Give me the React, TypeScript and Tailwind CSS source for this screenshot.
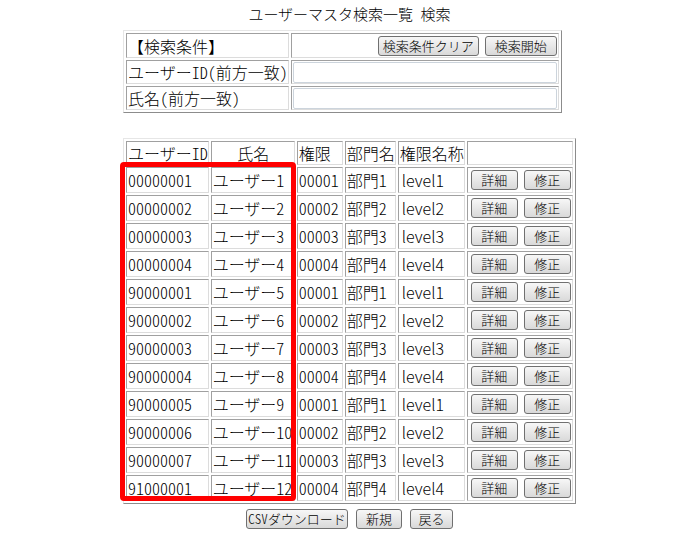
import React from 'react';

const users = [
  { id: '00000001', name: 'ユーザー1', role: '00001', dept: '部門1', level: 'level1' },
  { id: '00000002', name: 'ユーザー2', role: '00002', dept: '部門2', level: 'level2' },
  { id: '00000003', name: 'ユーザー3', role: '00003', dept: '部門3', level: 'level3' },
  { id: '00000004', name: 'ユーザー4', role: '00004', dept: '部門4', level: 'level4' },
  { id: '90000001', name: 'ユーザー5', role: '00001', dept: '部門1', level: 'level1' },
  { id: '90000002', name: 'ユーザー6', role: '00002', dept: '部門2', level: 'level2' },
  { id: '90000003', name: 'ユーザー7', role: '00003', dept: '部門3', level: 'level3' },
  { id: '90000004', name: 'ユーザー8', role: '00004', dept: '部門4', level: 'level4' },
  { id: '90000005', name: 'ユーザー9', role: '00001', dept: '部門1', level: 'level1' },
  { id: '90000006', name: 'ユーザー10', role: '00002', dept: '部門2', level: 'level2' },
  { id: '90000007', name: 'ユーザー11', role: '00003', dept: '部門3', level: 'level3' },
  { id: '91000001', name: 'ユーザー12', role: '00004', dept: '部門4', level: 'level4' },
];

const cell =
  'border border-t-[#a0a0a0] border-l-[#a0a0a0] border-b-[#dcdcdc] border-r-[#dcdcdc] p-0 pl-[1px] text-left align-middle whitespace-nowrap overflow-hidden';
const table =
  'border-separate border-spacing-[2px] border border-t-[#e6e6e6] border-l-[#e6e6e6] border-b-[#8c8c8c] border-r-[#8c8c8c] table-fixed';
const btn =
  'h-[20px] rounded-[3px] border border-[#707070] bg-gradient-to-b from-[#f7f7f7] to-[#d9d9d9] text-[13px] leading-[18px] text-black';

export default function App() {
  return (
    <div className="min-h-screen bg-white text-black text-[16px] leading-none font-light [font-family:'Noto_Sans_CJK_JP',sans-serif] [font-feature-settings:'hwid']">
      <div className="pt-[4px] text-center text-[15px] leading-[20px]">ユーザーマスタ検索一覧 検索</div>

      <div className="mx-auto mt-[6px] w-[453px]">
        <table className={table}>
          <tbody>
            <tr className="h-[25px]">
              <td className={`${cell} w-[160px]`}>【検索条件】</td>
              <td className={`${cell} w-[268px]`}>
                <div className="flex justify-end gap-[6px] pr-[1px]">
                  <button className={`${btn} w-[101px]`}>検索条件クリア</button>
                  <button className={`${btn} w-[72px]`}>検索開始</button>
                </div>
              </td>
            </tr>
            <tr className="h-[24px]">
              <td className={cell}>ユーザーID（前方一致）</td>
              <td className={cell}>
                <div className="h-[21px] w-[264px] rounded-[2px] border border-[#ccd4dc] bg-white" />
              </td>
            </tr>
            <tr className="h-[24px]">
              <td className={cell}>氏名（前方一致）</td>
              <td className={cell}>
                <div className="h-[21px] w-[264px] rounded-[2px] border border-[#ccd4dc] bg-white" />
              </td>
            </tr>
          </tbody>
        </table>

        <div className="relative mt-[25px] w-fit">
          <table className={table}>
            <thead>
              <tr className="h-[24px]">
                <th className={`${cell} w-[81px] font-light`}>ユーザーID</th>
                <th className={`${cell} w-[84px] font-light !text-center`}>氏名</th>
                <th className={`${cell} w-[46px] font-light`}>権限</th>
                <th className={`${cell} w-[51px] font-light`}>部門名</th>
                <th className={`${cell} w-[66px] font-light`}>権限名称</th>
                <th className={`${cell} w-[106px] font-light`}></th>
              </tr>
            </thead>
            <tbody>
              {users.map((u) => (
                <tr key={u.id} className="h-[26px]">
                  <td className={cell}>{u.id}</td>
                  <td className={cell}>{u.name}</td>
                  <td className={cell}>{u.role}</td>
                  <td className={cell}>{u.dept}</td>
                  <td className={`${cell} pl-[3px] [font-feature-settings:normal]`}>{u.level}</td>
                  <td className={cell}>
                    <div className="flex gap-[6px] pl-[2px]">
                      <button className={`${btn} w-[47px]`}>詳細</button>
                      <button className={`${btn} w-[47px]`}>修正</button>
                    </div>
                  </td>
                </tr>
              ))}
            </tbody>
          </table>
          <div className="pointer-events-none absolute left-[-3px] top-[24px] h-[339px] w-[176px] rounded-[4px] border-[5px] border-[#ff0000]" />
        </div>
      </div>

      <div className="mt-[5px] flex justify-center gap-[8px]">
        <button className={`${btn} w-[102px]`}>CSVダウンロード</button>
        <button className={`${btn} w-[46px]`}>新規</button>
        <button className={`${btn} w-[43px]`}>戻る</button>
      </div>
    </div>
  );
}
